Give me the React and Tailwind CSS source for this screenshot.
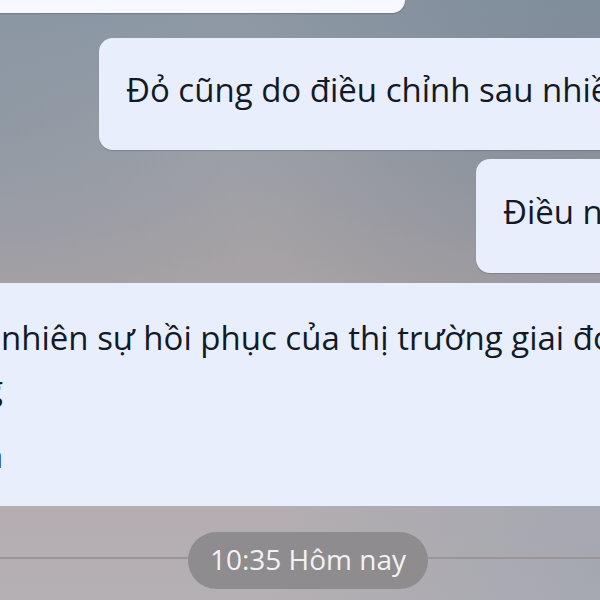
const Bubble = ({ className, children }) => (
    <div className={`bg-[#e9eefc] rounded-[14px] shadow-[0_1px_1px_rgba(60,60,70,0.25)] ${className}`}>
        {children}
    </div>
);

export default function App() {
    return (
        <div
            className="relative w-[600px] h-[600px] overflow-hidden bg-[linear-gradient(180deg,#8c98a5_0%,#9ea1a7_25%,#a7a2a5_45%,#b3adb0_80%,#b5b0b3_100%)] text-[#121a27]"
            style={{ fontFamily: '"Open Sans", "Noto Sans", sans-serif' }}
        >
            {/* soft blur tint, top right / bottom right */}
            <div className="absolute inset-0 bg-[radial-gradient(ellipse_at_100%_15%,rgba(110,125,140,0.55),transparent_45%),radial-gradient(ellipse_at_100%_95%,rgba(150,160,175,0.5),transparent_40%),radial-gradient(ellipse_at_0%_20%,rgba(130,145,160,0.45),transparent_35%)]" />

            <div className="relative flex flex-col">
                {/* previous message, mostly scrolled away */}
                <div className="h-[13px] w-[405px] bg-[#f8f9fe] rounded-br-[14px] shadow-[0_1px_1px_rgba(60,60,70,0.3)]" />

                <Bubble className="mt-[25px] ml-[99px] w-[620px] h-[112px] flex items-center pl-[27px] pb-[8px] text-[33px] whitespace-nowrap">
                    Đỏ cũng do điều chỉnh sau nhiều phiên tăng
                </Bubble>

                <Bubble className="mt-[9px] ml-[476px] w-[300px] h-[114px] flex items-center pl-[27px] pb-[8px] text-[33px] whitespace-nowrap">
                    Điều này
                </Bubble>

                <div className="mt-[10px] -ml-[20px] w-[660px] h-[223px] bg-[#e9eefc] rounded-[14px] pt-[30px] text-[33px] leading-[50px] whitespace-nowrap">
                    <div className="pl-[21px]">nhiên sự hồi phục của thị trường giai đoạn</div>
                    <div className="pl-[5px]">g</div>
                    <div className="mt-[18px] pl-[3px]">n</div>
                </div>

                {/* time separator */}
                <div className="relative mt-[25px] h-[58px] flex items-center justify-center">
                    <div className="absolute left-0 right-0 top-[26px] h-[2px] bg-[#9b9598]" />
                    <div className="relative ml-[16px] h-[57px] w-[240px] justify-center pb-[2px] rounded-full bg-[#8f8c8f] flex items-center text-[#f2f2f4] text-[28px]">
                        10:35 Hôm nay
                    </div>
                </div>
            </div>
        </div>
    );
}
